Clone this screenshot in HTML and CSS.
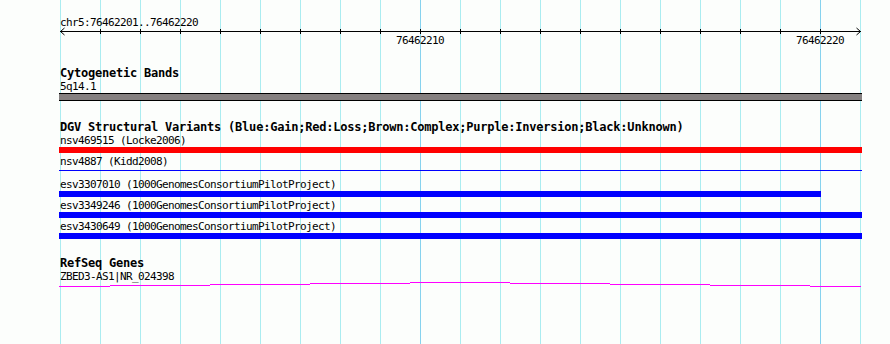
FILE: index.html
```html
<!DOCTYPE html>
<html lang="en">
<head>
    <meta charset="UTF-8">
    <title>chr5:76462201..76462220</title>
    <link rel="stylesheet" href="styles.css">
</head>
<body>
<div class="panel">
    <div class="ruler">
        <div class="small">chr5:76462201..76462220</div>
        <svg class="ruler_line" width="803" height="8" viewBox="0 0 803 8">
            <g stroke="#000" stroke-width="1" fill="none" shape-rendering="crispEdges">
                <line x1="1" y1="5.5" x2="802" y2="5.5"/>
                <line x1="41.5" y1="3" x2="41.5" y2="8"/>
                <line x1="81.5" y1="3" x2="81.5" y2="8"/>
                <line x1="121.5" y1="3" x2="121.5" y2="8"/>
                <line x1="161.5" y1="3" x2="161.5" y2="8"/>
                <line x1="201.5" y1="3" x2="201.5" y2="8"/>
                <line x1="241.5" y1="3" x2="241.5" y2="8"/>
                <line x1="281.5" y1="3" x2="281.5" y2="8"/>
                <line x1="321.5" y1="3" x2="321.5" y2="8"/>
                <line x1="361.5" y1="3" x2="361.5" y2="8"/>
                <line x1="401.5" y1="3" x2="401.5" y2="8"/>
                <line x1="441.5" y1="3" x2="441.5" y2="8"/>
                <line x1="481.5" y1="3" x2="481.5" y2="8"/>
                <line x1="521.5" y1="3" x2="521.5" y2="8"/>
                <line x1="561.5" y1="3" x2="561.5" y2="8"/>
                <line x1="601.5" y1="3" x2="601.5" y2="8"/>
                <line x1="641.5" y1="3" x2="641.5" y2="8"/>
                <line x1="681.5" y1="3" x2="681.5" y2="8"/>
                <line x1="721.5" y1="3" x2="721.5" y2="8"/>
                <line x1="761.5" y1="3" x2="761.5" y2="8"/>
            </g>
            <g stroke="#000" stroke-width="1" fill="none">
                <polyline points="5.5,2 1.5,5.5 5.5,9"/>
                <polyline points="797.5,2 801.5,5.5 797.5,9"/>
            </g>
        </svg>
        <div class="scale">
            <span class="small tick_label" style="left: 396px">76462210</span>
            <span class="small tick_label" style="left: 796px">76462220</span>
        </div>
    </div>

    <div class="track">
        <div class="track_title">Cytogenetic Bands</div>
        <div class="small">5q14.1</div>
        <div class="band"></div>
    </div>

    <div class="track">
        <div class="track_title">DGV Structural Variants (Blue:Gain;Red:Loss;Brown:Complex;Purple:Inversion;Black:Unknown)</div>
        <div class="variant">
            <div class="small">nsv469515 (Locke2006)</div>
            <div class="bar loss"></div>
        </div>
        <div class="variant">
            <div class="small">nsv4887 (Kidd2008)</div>
            <div class="bar"><div class="thin"></div></div>
        </div>
        <div class="variant">
            <div class="small">esv3307010 (1000GenomesConsortiumPilotProject)</div>
            <div class="bar gain short"></div>
        </div>
        <div class="variant">
            <div class="small">esv3349246 (1000GenomesConsortiumPilotProject)</div>
            <div class="bar gain"></div>
        </div>
        <div class="variant">
            <div class="small">esv3430649 (1000GenomesConsortiumPilotProject)</div>
            <div class="bar gain"></div>
        </div>
    </div>

    <div class="track refseq">
        <div class="track_title">RefSeq Genes</div>
        <div class="small">ZBED3-AS1|NR_024398</div>
        <svg class="intron" width="803" height="6" viewBox="0 0 803 6" shape-rendering="crispEdges">
            <g fill="#ff00ff">
                <rect x="0" y="4" width="51" height="1"/>
                <rect x="51" y="3" width="100" height="1"/>
                <rect x="151" y="2" width="100" height="1"/>
                <rect x="251" y="1" width="100" height="1"/>
                <rect x="351" y="0" width="100" height="1"/>
                <rect x="451" y="1" width="100" height="1"/>
                <rect x="551" y="2" width="100" height="1"/>
                <rect x="651" y="3" width="100" height="1"/>
                <rect x="751" y="4" width="51" height="1"/>
            </g>
        </svg>
    </div>
</div>
</body>
</html>
```

FILE: styles.css
```css
* {
    margin: 0;
    padding: 0;
    box-sizing: border-box;
}
html, body {
    width: 890px;
    height: 344px;
    overflow: hidden;
    background-color: #fcfefc;
}
.panel {
    width: 890px;
    height: 344px;
    color: #000;
    background-image:
        linear-gradient(to right, #86d2ee, #86d2ee),
        linear-gradient(to right, #86d2ee, #86d2ee),
        repeating-linear-gradient(to right, #aaecf0 0, #aaecf0 1px, transparent 1px, transparent 40px);
    background-position: 420px 0, 820px 0, 60px 0;
    background-size: 1px 100%, 1px 100%, 801px 100%;
    background-repeat: no-repeat;
}
.small {
    font-family: "DejaVu Sans Mono", monospace;
    font-size: 11px;
    letter-spacing: -0.62px;
    line-height: 13px;
    height: 13px;
    padding-left: 60px;
    white-space: nowrap;
}
.track_title {
    font-family: "DejaVu Sans Mono", monospace;
    font-size: 12px;
    font-weight: bold;
    letter-spacing: -0.22px;
    line-height: 13px;
    height: 13px;
    padding-left: 60px;
    white-space: nowrap;
}
.ruler {
    padding-top: 16px;
}
.ruler_line {
    display: block;
    margin-top: -3px;
    margin-left: 59px;
    overflow: visible;
}
.scale {
    position: relative;
    height: 13px;
}
.tick_label {
    position: absolute;
    top: 0;
    padding-left: 0;
}
.track {
    margin-top: 20px;
}
.band {
    margin-left: 59px;
    width: 803px;
    height: 8px;
    background-color: #858080;
    border-top: 1px solid #000;
    border-bottom: 1px solid #000;
}
.variant {
    margin-bottom: 2px;
}
.bar {
    margin-left: 59px;
    width: 803px;
    height: 6px;
}
.bar.loss {
    background-color: #ff0000;
}
.bar.gain {
    background-color: #0000ff;
}
.bar.short {
    width: 762px;
}
.thin {
    margin-top: 2px;
    height: 1px;
    background-color: #0000ff;
}
.refseq {
    margin-top: 18px;
}
.intron {
    display: block;
    margin-top: -1px;
    margin-left: 59px;
}
```
